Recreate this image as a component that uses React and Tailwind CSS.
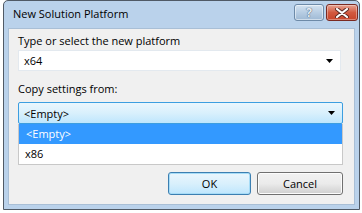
import React from 'react';

const font = { fontFamily: '"Open Sans", "Noto Sans", sans-serif' };

function Caret() {
  return (
    <svg width="7" height="4" viewBox="0 0 7 4" className="shrink-0">
      <path d="M0 0 H7 L3.5 4 Z" fill="#000" />
    </svg>
  );
}

function CaptionButtons() {
  return (
    <div className="flex gap-[2px] mt-[3px]">
      {/* help */}
      <div className="w-[30px] h-[17px] rounded-[3px] border border-[#6d8aa8] bg-gradient-to-b from-[#d5e3f1] via-[#b7cde3] to-[#9fb9d4] flex items-center justify-center shadow-[inset_0_0_0_1px_rgba(255,255,255,0.5)]">
        <span className="text-[12px] leading-none font-bold text-[#e8eef5] [text-shadow:0_0_1px_#4a5e74,0_0_1px_#4a5e74]">?</span>
      </div>
      {/* close */}
      <div className="w-[32px] h-[17px] rounded-[3px] border border-[#7a2a22] bg-gradient-to-b from-[#e5a393] via-[#d2593f] to-[#c8452b] flex items-center justify-center shadow-[inset_0_0_0_1px_rgba(255,255,255,0.35)]">
        <svg width="14" height="10" viewBox="0 0 14 10">
          <path d="M2 1 L12 9 M12 1 L2 9" stroke="#5a2b25" strokeWidth="4" strokeLinecap="round" />
          <path d="M2 1 L12 9 M12 1 L2 9" stroke="#fff" strokeWidth="2.2" strokeLinecap="round" />
        </svg>
      </div>
    </div>
  );
}

export default function App() {
  return (
    <div className="w-[362px] h-[213px] bg-white" style={font}>
      <div className="ml-[3px] w-[357px] h-[210px] border border-[#505a66] rounded-t-[5px] bg-[#bad2eb] flex flex-col">
        {/* Title bar */}
        <div className="h-[27px] flex items-start justify-between pl-[9px] pr-[1px] shrink-0">
          <span className="text-[11px] leading-[14px] text-black mt-[6px]">New Solution Platform</span>
          <CaptionButtons />
        </div>

        {/* Client area */}
        <div className="flex-1 mx-[4px] mb-[4px] bg-[#f0f0f0] border border-[#a9bfd6] pl-[9px] pr-[11px] pt-[4px] text-[11px] text-black">
          <div className="leading-[16px]">Type or select the new platform</div>
          <div className="mt-[1px] w-[323px] h-[21px] bg-white border border-[#e3e9ef] flex items-center justify-between pl-[5px] pr-[7px]">
            <span className="leading-none">x64</span>
            <Caret />
          </div>

          <div className="mt-[10px] leading-[16px]">Copy settings from:</div>
          <div className="mt-[5px] w-[325px] h-[22px] rounded-[2px] border border-[#3c9ee0] bg-gradient-to-b from-[#eaf6fd] via-[#d9f0fc] to-[#bee6fd] flex items-center justify-between pl-[5px] pr-[7px]">
            <span className="leading-none">&lt;Empty&gt;</span>
            <Caret />
          </div>
          <div className="w-[325px] bg-white border border-t-0 border-[#c8c8c8]">
            <div className="h-[20px] bg-[#3399ff] text-white flex items-center pl-[7px]">&lt;Empty&gt;</div>
            <div className="h-[20px] flex items-center pl-[6px]">x86</div>
          </div>

          <div className="mt-[7px] flex justify-end gap-[6px]">
            <button className="w-[83px] h-[23px] rounded-[3px] border border-[#3c7fb1] bg-gradient-to-b from-[#eaf6fd] via-[#d9f0fc] to-[#bee6fd] shadow-[inset_0_0_0_1px_#a6dcf7] text-[11px] leading-none">
              OK
            </button>
            <button className="w-[86px] h-[23px] rounded-[3px] border border-[#707070] bg-gradient-to-b from-[#f2f2f2] via-[#ebebeb] to-[#cfcfcf] shadow-[inset_0_0_0_1px_#fcfcfc] text-[11px] leading-none">
              Cancel
            </button>
          </div>
        </div>
      </div>
    </div>
  );
}
